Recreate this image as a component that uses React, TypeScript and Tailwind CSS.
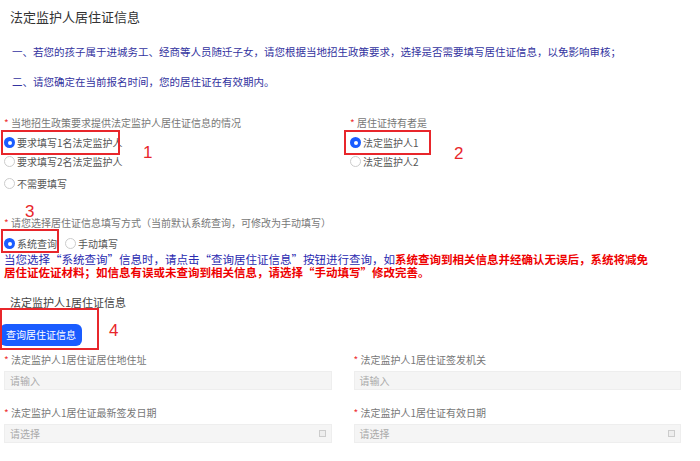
const F = { fontFamily: '"Noto Sans CJK SC","Noto Sans",sans-serif' };

function Radio({ on, label }: { on?: boolean; label: string }) {
  return (
    <div className="flex items-center gap-[2px] h-[19px] text-[10px] text-[#555]">
      {on ? (
        <span className="w-[11px] h-[11px] rounded-full bg-[#1a5cff] flex items-center justify-center">
          <span className="w-[4px] h-[4px] rounded-full bg-white" />
        </span>
      ) : (
        <span className="w-[11px] h-[11px] rounded-full border border-[#ccc] bg-white" />
      )}
      <span>{label}</span>
    </div>
  );
}

function Label({ t }: { t: string }) {
  return (
    <div className="text-[10px] text-[#777] leading-[14px]">
      <span className="text-[#e33]">* </span>
      {t}
    </div>
  );
}

function Field({ label, ph, cal }: { label: string; ph: string; cal?: boolean }) {
  return (
    <div className="flex-1">
      <Label t={label} />
      <div className="mt-[4px] h-[19px] bg-[#f5f5f5] border border-[#eee] flex items-center justify-between px-[5px] text-[10px] text-[#aaa]">
        <span>{ph}</span>
        {cal && <span className="w-[7px] h-[7px] border border-[#ccc] bg-[#eee]" />}
      </div>
    </div>
  );
}

function Box({ c }: { c: string }) {
  return <div className={"absolute border-2 border-[#e8262b] " + c} />;
}
function Num({ c, n }: { c: string; n: string }) {
  return <div className={"absolute text-[17px] text-[#e8262b] leading-none " + c} style={{ fontFamily: '"Liberation Sans",sans-serif' }}>{n}</div>;
}

export default function App() {
  return (
    <div className="relative w-[700px] h-[461px] bg-white overflow-hidden" style={F}>
      <div className="pl-[10px] pt-[7px] text-[13px] text-[#333] leading-[20px]">法定监护人居住证信息</div>
      <div className="pl-[12px] mt-[15px] text-[10.5px] text-[#3333a0] leading-[20px]">一、若您的孩子属于进城务工、经商等人员随迁子女，请您根据当地招生政策要求，选择是否需要填写居住证信息，以免影响审核；</div>
      <div className="pl-[12px] mt-[10px] text-[10.5px] text-[#3333a0] leading-[20px]">二、请您确定在当前报名时间，您的居住证在有效期内。</div>
      <div className="flex mt-[24px] pl-[4px]">
        <div className="w-[346px]">
          <Label t="当地招生政策要求提供法定监护人居住证信息的情况" />
          <div className="mt-[3px]">
            <Radio on label="要求填写1名法定监护人" />
            <Radio label="要求填写2名法定监护人" />
            <div className="mt-[3px]"><Radio label="不需要填写" /></div>
          </div>
        </div>
        <div>
          <Label t="居住证持有者是" />
          <div className="mt-[3px]">
            <Radio on label="法定监护人1" />
            <Radio label="法定监护人2" />
          </div>
        </div>
      </div>
      <div className="pl-[4px] mt-[23px]">
        <Label t="请您选择居住证信息填写方式（当前默认系统查询，可修改为手动填写）" />
        <div className="flex gap-[8px] mt-[4px]">
          <Radio on label="系统查询" />
          <Radio label="手动填写" />
        </div>
      </div>
      <div className="pl-[4px] pr-[52px] text-[11.5px] leading-[13px] font-bold">
        <span className="text-[#2a2ab0] font-normal">当您选择“系统查询”信息时，请点击“查询居住证信息”按钮进行查询，如</span>
        <span className="text-[#e00]">系统查询到相关信息并经确认无误后，系统将减免居住证佐证材料；如信息有误或未查询到相关信息，请选择“手动填写”修改完善。</span>
      </div>
      <div className="pl-[10px] mt-[15px] text-[11px] text-[#444] leading-[16px]">法定监护人1居住证信息</div>
      <div className="mt-[10px]">
        <button className="h-[22px] px-[6px] rounded-[6px] bg-[#1a5cff] text-white text-[10px]">查询居住证信息</button>
      </div>
      <div className="flex gap-[22px] pl-[4px] pr-[19px] mt-[7px]">
        <Field label="法定监护人1居住证居住地住址" ph="请输入" />
        <Field label="法定监护人1居住证签发机关" ph="请输入" />
      </div>
      <div className="flex gap-[22px] pl-[4px] pr-[19px] mt-[16px]">
        <Field label="法定监护人1居住证最新签发日期" ph="请选择" cal />
        <Field label="法定监护人1居住证有效日期" ph="请选择" cal />
      </div>

      <Box c="left-[1px] top-[130px] w-[119px] h-[25px]" />
      <Num c="left-[143px] top-[144px]" n="1" />
      <Box c="left-[344px] top-[130px] w-[87px] h-[25px]" />
      <Num c="left-[454px] top-[145px]" n="2" />
      <Box c="left-[1px] top-[229px] w-[58px] h-[24px]" />
      <Num c="left-[25px] top-[203px]" n="3" />
      <Box c="left-[0px] top-[308px] w-[99px] h-[42px]" />
      <Num c="left-[109px] top-[322px]" n="4" />
    </div>
  );
}
